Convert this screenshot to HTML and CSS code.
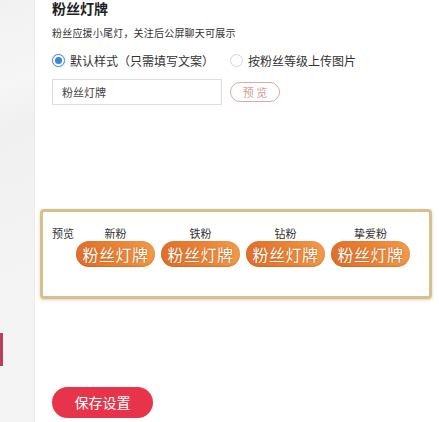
FILE: index.html
```html
<!DOCTYPE html>
<html lang="zh-CN">
<head>
<meta charset="utf-8">
<link rel="stylesheet" href="styles.css">
</head>
<body>
<div class="page">
  <aside class="sidebar"><div class="indicator"></div></aside>
  <main class="main">
    <h1 class="title">粉丝灯牌</h1>
    <p class="desc">粉丝应援小尾灯，关注后公屏聊天可展示</p>
    <div class="radios">
      <label class="radio"><span class="dot on"></span><span>默认样式（只需填写文案）</span></label>
      <label class="radio"><span class="dot"></span><span>按粉丝等级上传图片</span></label>
    </div>
    <div class="input-row">
      <div class="input">粉丝灯牌</div>
      <div class="preview-btn">预 览</div>
    </div>
    <div class="preview-box">
      <div class="plabel">预览</div>
      <div class="col"><div class="lvl">新粉</div><div class="badge">粉丝灯牌</div></div>
      <div class="col"><div class="lvl">铁粉</div><div class="badge">粉丝灯牌</div></div>
      <div class="col"><div class="lvl">钻粉</div><div class="badge">粉丝灯牌</div></div>
      <div class="col"><div class="lvl">挚爱粉</div><div class="badge">粉丝灯牌</div></div>
    </div>
    <div class="save">保存设置</div>
  </main>
</div>
</body>
</html>
```
FILE: styles.css
```css
* { box-sizing: border-box; }
html, body { margin: 0; padding: 0; background: #fff; }
body {
  font-family: "Noto Sans CJK SC", "Noto Sans", sans-serif;
  color: #333;
}
.page { display: flex; height: 422px; overflow: hidden; }
.sidebar {
  width: 35px;
  flex: none;
  background: linear-gradient(160deg, #f1f1f2 0%, #f6f6f7 20%, #f0f0f1 30%, #f3f3f4 60%, #f4f4f5 100%);
  border-right: 1px solid #ececec;
  padding-top: 333px;
}
.indicator { width: 3px; height: 33px; background: #b9405c; }
.main { flex: 1; padding-left: 17px; }
.title {
  margin: 0;
  font-size: 14px;
  line-height: 17px;
  font-weight: 700;
  color: #222;
}
.desc {
  margin: 9px 0 0;
  font-size: 10px;
  line-height: 14px;
  letter-spacing: 0.2px;
  color: #333;
}
.radios { margin-top: 12px; display: flex; gap: 16px; height: 16px; align-items: center; }
.radio { display: flex; align-items: center; gap: 5px; font-size: 12px; color: #333; }
.dot {
  width: 13px; height: 13px; border-radius: 50%;
  border: 1px solid #d4d4d4; background: #fff;
  display: flex; align-items: center; justify-content: center;
}
.dot.on { border-color: #4f8fdd; box-shadow: 0 0 2px rgba(79,143,221,.5); }
.dot.on::after { content: ""; width: 7px; height: 7px; border-radius: 50%; background: #3f82db; }
.input-row { margin-top: 11px; display: flex; align-items: center; gap: 8px; }
.input {
  width: 170px; height: 26px;
  border: 1px solid #dedede;
  padding-left: 9px;
  font-size: 11px; line-height: 24px; color: #444;
}
.preview-btn {
  width: 50px; height: 20px;
  border: 1px solid #d9a9a5;
  border-radius: 10px;
  font-size: 11px; line-height: 18px;
  text-align: center; color: #d89a94;
}
.preview-box {
  margin: 104px 0 0 -12px;
  width: 392px; height: 90px;
  border: 3px solid #d9bf8d;
  border-radius: 4px;
  box-shadow: 0 1px 3px rgba(150,120,60,.35);
  display: flex;
  padding: 14px 0 0 9px;
  gap: 6px;
}
.plabel { width: 18px; font-size: 11px; line-height: 14px; color: #333; white-space: nowrap; }
.col { width: 79px; display: flex; flex-direction: column; align-items: center; }
.lvl { font-size: 11px; line-height: 14px; color: #333; }
.badge {
  margin-top: 1px;
  width: 79px; height: 26px;
  border-radius: 13px;
  background: linear-gradient(90deg, #e0702a 0%, #ea8436 55%, #f19a4c 100%);
  box-shadow: inset 0 -1px 2px rgba(170,70,10,.35);
  color: #fff;
  font-size: 16px; line-height: 26px;
  text-align: center;
  letter-spacing: 0.5px;
  text-shadow: 0 0 2px rgba(160,60,0,.6);
}
.save {
  margin-top: 88px;
  width: 101px; height: 31px;
  border-radius: 16px;
  background: #e7344b;
  color: #fff;
  font-size: 14px; line-height: 31px;
  text-align: center;
}
```
